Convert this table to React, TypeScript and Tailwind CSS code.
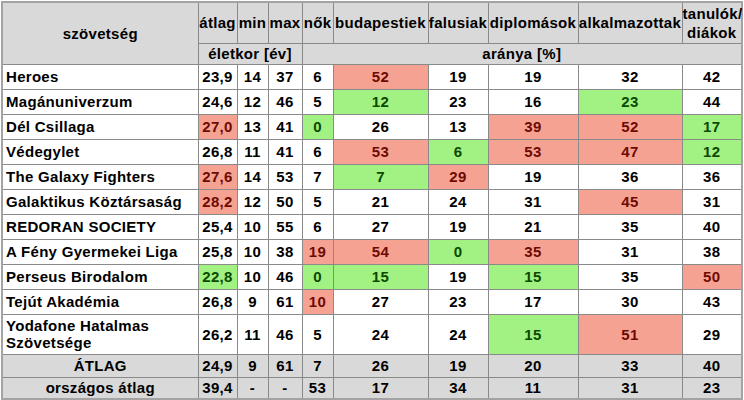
import React from 'react';

type Tone = 'r' | 'g' | '';
type Cell = [string, Tone];

const rows: { name: string; cells: Cell[]; tall?: boolean }[] = [
  { name: 'Heroes', cells: [['23,9', ''], ['14', ''], ['37', ''], ['6', ''], ['52', 'r'], ['19', ''], ['19', ''], ['32', ''], ['42', '']] },
  { name: 'Magánuniverzum', cells: [['24,6', ''], ['12', ''], ['46', ''], ['5', ''], ['12', 'g'], ['23', ''], ['16', ''], ['23', 'g'], ['44', '']] },
  { name: 'Dél Csillaga', cells: [['27,0', 'r'], ['13', ''], ['41', ''], ['0', 'g'], ['26', ''], ['13', ''], ['39', 'r'], ['52', 'r'], ['17', 'g']] },
  { name: 'Védegylet', cells: [['26,8', ''], ['11', ''], ['41', ''], ['6', ''], ['53', 'r'], ['6', 'g'], ['53', 'r'], ['47', 'r'], ['12', 'g']] },
  { name: 'The Galaxy Fighters', cells: [['27,6', 'r'], ['14', ''], ['53', ''], ['7', ''], ['7', 'g'], ['29', 'r'], ['19', ''], ['36', ''], ['36', '']] },
  { name: 'Galaktikus Köztársaság', cells: [['28,2', 'r'], ['12', ''], ['50', ''], ['5', ''], ['21', ''], ['24', ''], ['31', ''], ['45', 'r'], ['31', '']] },
  { name: 'REDORAN SOCIETY', cells: [['25,4', ''], ['10', ''], ['55', ''], ['6', ''], ['27', ''], ['19', ''], ['21', ''], ['35', ''], ['40', '']] },
  { name: 'A Fény Gyermekei Liga', cells: [['25,8', ''], ['10', ''], ['38', ''], ['19', 'r'], ['54', 'r'], ['0', 'g'], ['35', 'r'], ['31', ''], ['38', '']] },
  { name: 'Perseus Birodalom', cells: [['22,8', 'g'], ['10', ''], ['46', ''], ['0', 'g'], ['15', 'g'], ['19', ''], ['15', 'g'], ['35', ''], ['50', 'r']] },
  { name: 'Tejút Akadémia', cells: [['26,8', ''], ['9', ''], ['61', ''], ['10', 'r'], ['27', ''], ['23', ''], ['17', ''], ['30', ''], ['43', '']] },
  { name: 'Yodafone Hatalmas Szövetsége', tall: true, cells: [['26,2', ''], ['11', ''], ['46', ''], ['5', ''], ['24', ''], ['24', ''], ['15', 'g'], ['51', 'r'], ['29', '']] },
];

const totals = [
  { name: 'ÁTLAG', h: 'h-[23px]', cells: ['24,9', '9', '61', '7', '26', '19', '20', '33', '40'] },
  { name: 'országos átlag', h: 'h-[22px]', cells: ['39,4', '-', '-', '53', '17', '34', '11', '31', '23'] },
];

const widths = ['w-[196px]', 'w-[39px]', 'w-[31px]', 'w-[34px]', 'w-[31px]', 'w-[95px]', 'w-[60px]', 'w-[90px]', 'w-[104px]', 'w-[60px]'];

const toneClass = (t: Tone) =>
  t === 'r' ? 'bg-[#f6a293] text-[#6e0a00]' : t === 'g' ? 'bg-[#a2f183] text-[#0b4a00]' : 'bg-white text-black';

export default function App() {
  return (
    <div className="w-[744px] h-[400px] bg-white pt-[1px] pl-[1px] font-['Liberation_Sans',Arial,sans-serif] font-bold text-[15px] tracking-[0.3px] leading-[17px]">
      <table className="table-fixed w-[741px] border-collapse border-2 border-[#a3a3a3]">
        <colgroup>
          {widths.map((w, i) => (
            <col key={i} className={w} />
          ))}
        </colgroup>
        <thead>
          <tr className="h-[41px] bg-[#d9d9d9]">
            <th rowSpan={2} className="border border-[#8a8a8a] text-center font-bold">szövetség</th>
            {['átlag', 'min', 'max', 'nők', 'budapestiek', 'falusiak', 'diplomások', 'alkalmazottak'].map((h) => (
              <th key={h} className="border border-[#8a8a8a] text-center font-bold px-0 whitespace-nowrap">{h}</th>
            ))}
            <th className="border border-[#8a8a8a] text-center font-bold leading-[19px]">
              tanulók/
              <br />
              diákok
            </th>
          </tr>
          <tr className="h-[21px] bg-[#d9d9d9]">
            <th colSpan={3} className="border border-[#8a8a8a] text-center font-bold">életkor [év]</th>
            <th colSpan={6} className="border border-[#8a8a8a] text-center font-bold">aránya [%]</th>
          </tr>
        </thead>
        <tbody>
          {rows.map((r) => (
            <tr key={r.name} className={r.tall ? 'h-[40px]' : 'h-[25px]'}>
              <td className="border border-[#8a8a8a] bg-white text-left pl-[3px] text-black">
                {r.tall ? (
                  <>
                    Yodafone Hatalmas
                    <br />
                    Szövetsége
                  </>
                ) : (
                  r.name
                )}
              </td>
              {r.cells.map(([v, t], i) => (
                <td key={i} className={`border border-[#8a8a8a] text-center ${toneClass(t)}`}>{v}</td>
              ))}
            </tr>
          ))}
          {totals.map((r) => (
            <tr key={r.name} className={`${r.h} bg-[#d9d9d9]`}>
              <td className="border border-[#8a8a8a] text-center">{r.name}</td>
              {r.cells.map((v, i) => (
                <td key={i} className="border border-[#8a8a8a] text-center">{v}</td>
              ))}
            </tr>
          ))}
        </tbody>
      </table>
    </div>
  );
}
